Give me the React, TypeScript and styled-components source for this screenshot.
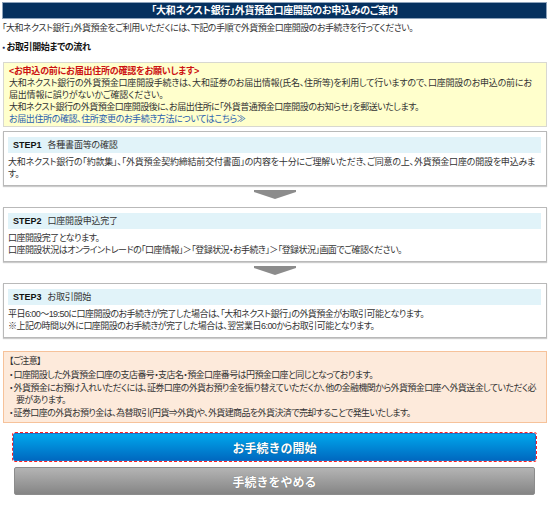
import React from "react";
import styled, { createGlobalStyle } from "styled-components";

const Global = createGlobalStyle`
  html, body { margin: 0; padding: 0; background: #fff; }
  body {
    font-family: "Liberation Sans", "Noto Sans CJK JP", sans-serif;
    font-size: 9px;
    color: #333;
    font-feature-settings: "palt";
    letter-spacing: -0.2px;
  }
`;

const Page = styled.div`
  width: 550px;
  padding: 2px 3px 10px 2px;
  box-sizing: border-box;
`;

const TitleBar = styled.h1`
  margin: 0;
  height: 17px;
  background: #06315f;
  border: 1px solid #8ea3bb;
  box-sizing: border-box;
  color: #fff;
  font-size: 10px;
  font-weight: bold;
  letter-spacing: -0.3px;
  line-height: 15px;
  text-align: center;
`;

const Intro = styled.p`
  margin: 3px 0 0 0;
  line-height: 12px;
  letter-spacing: -0.5px;
`;

const FlowHeading = styled.p`
  margin: 7px 0 0 0;
  font-weight: bold;
  color: #111;
  line-height: 12px;
  letter-spacing: -0.4px;
  &::before { content: "●"; color: #1a2a5a; font-size: 5px; vertical-align: 1px; margin-right: 2px; }
`;

const NoticeBox = styled.div`
  margin: 9px 0 0 1px;
  background: #ffffcc;
  border: 1px solid #d8d8d0;
  padding: 2px 10px 1px 5px;
  line-height: 12px;
`;

const NoticeTitle = styled.div`
  color: #cc1111;
  font-weight: bold;
`;

const NoticeText = styled.div<{ $tight?: boolean }>`
  letter-spacing: ${(p) => (p.$tight ? "-0.5px" : "inherit")};
`;

const NoticeLink = styled.a`
  display: block;
  color: #2b5fae;
  text-decoration: none;
  letter-spacing: -0.4px;
`;

const StepBox = styled.div<{ $first?: boolean }>`
  margin: ${(p) => (p.$first ? "4px" : "0")} 0 0 1px;
  border: 1px solid #b9b9b9;
  box-shadow: 0 1px 1px #ccc;
  padding: 5px 5px 5px 4px;
`;

const StepHead = styled.div`
  background: #e1f3f9;
  height: 16px;
  line-height: 16px;
  padding: 0 5px;
  color: #333;
`;

const StepNo = styled.span`
  font-weight: bold;
  color: #111;
  margin-right: 6px;
  letter-spacing: 0;
`;

const StepBody = styled.div<{ $tight?: boolean }>`
  margin-top: 3px;
  line-height: 12px;
  letter-spacing: ${(p) => (p.$tight ? "-0.55px" : "inherit")};
`;

const ArrowRow = styled.div`
  display: flex;
  justify-content: center;
  padding: 4px 0 8px 0;
  svg { display: block; }
`;

const CautionBox = styled.div`
  margin: 13px 0 0 1px;
  background: #fdeadb;
  border: 1px solid #f6c29a;
  padding: 3px 4px 3px 5px;
  line-height: 12px;
  letter-spacing: -0.6px;
`;

const CautionList = styled.ul`
  list-style: none;
  margin: 2px 0 0 0;
  padding: 0;
`;

const CautionItem = styled.li`
  padding-left: 7px;
  text-indent: -7px;
  margin-bottom: 1px;
  &:last-child { margin-bottom: 0; }
  &::before { content: "・"; letter-spacing: -4px; margin-right: 4px; }
`;

const Buttons = styled.div`
  display: flex;
  flex-direction: column;
  gap: 6px;
  padding: 10px 11px 0 11px;
`;

const Button = styled.button<{ $variant: "primary" | "secondary" }>`
  display: block;
  width: 100%;
  height: 28px;
  border-radius: 2px;
  font-family: "Liberation Sans", "Noto Sans CJK JP", sans-serif;
  font-size: 12px;
  font-weight: bold;
  letter-spacing: 0;
  color: #fff;
  text-shadow: 0 0 1px rgba(0, 0, 0, 0.4);
  cursor: pointer;
  ${(p) =>
    p.$variant === "primary"
      ? `
    background: linear-gradient(#00a7ec, #0069c0);
    border: 1px solid #1c72c9;
    outline: 1px dashed #ff2222;
    outline-offset: 0px;
  `
      : `
    background: linear-gradient(#b4b4b4, #858585);
    border: 1px solid #8c8c8c;
    margin-left: 1px;
    width: calc(100% - 2px);
  `}
`;

const DownArrow = () => (
  <svg width="42" height="9" viewBox="0 0 42 9">
    <polygon points="0,0 42,0 42,2 21,9 0,2" fill="#8c8c8c" />
  </svg>
);

export default function App() {
  return (
    <>
      <Global />
      <Page>
        <TitleBar>「大和ネクスト銀行」外貨預金口座開設のお申込みのご案内</TitleBar>
        <Intro>
          「大和ネクスト銀行」外貨預金をご利用いただくには、下記の手順で外貨預金口座開設のお手続きを行ってください。
        </Intro>
        <FlowHeading>お取引開始までの流れ</FlowHeading>
        <NoticeBox>
          <NoticeTitle>&lt;お申込の前にお届出住所の確認をお願いします&gt;</NoticeTitle>
          <NoticeText>
            大和ネクスト銀行の外貨預金口座開設手続きは、大和証券のお届出情報(氏名、住所等)を利用して行いますので、口座開設のお申込の前にお届出情報に誤りがないかご確認ください。
          </NoticeText>
          <NoticeText $tight>
            大和ネクスト銀行の外貨預金口座開設後に、お届出住所に「外貨普通預金口座開設のお知らせ」を郵送いたします。
          </NoticeText>
          <NoticeLink href="#">お届出住所の確認、住所変更のお手続き方法についてはこちら≫</NoticeLink>
        </NoticeBox>

        <StepBox $first>
          <StepHead>
            <StepNo>STEP1</StepNo>各種書面等の確認
          </StepHead>
          <StepBody>
            大和ネクスト銀行の「約款集」、「外貨預金契約締結前交付書面」の内容を十分にご理解いただき、ご同意の上、外貨預金口座の開設を申込みます。
          </StepBody>
        </StepBox>
        <ArrowRow>
          <DownArrow />
        </ArrowRow>
        <StepBox>
          <StepHead>
            <StepNo>STEP2</StepNo>口座開設申込完了
          </StepHead>
          <StepBody $tight>
            <div>口座開設完了となります。</div>
            <div>口座開設状況はオンライントレードの「口座情報」＞「登録状況・お手続き」＞「登録状況」画面でご確認ください。</div>
          </StepBody>
        </StepBox>
        <ArrowRow>
          <DownArrow />
        </ArrowRow>
        <StepBox>
          <StepHead>
            <StepNo>STEP3</StepNo>お取引開始
          </StepHead>
          <StepBody $tight>
            <div>平日6:00～19:50に口座開設のお手続きが完了した場合は、「大和ネクスト銀行」の外貨預金がお取引可能となります。</div>
            <div>※上記の時間以外に口座開設のお手続きが完了した場合は、翌営業日6:00からお取引可能となります。</div>
          </StepBody>
        </StepBox>

        <CautionBox>
          <div>【ご注意】</div>
          <CautionList>
            <CautionItem>口座開設した外貨預金口座の支店番号・支店名・預金口座番号は円預金口座と同じとなっております。</CautionItem>
            <CautionItem>外貨預金にお預け入れいただくには、証券口座の外貨お預り金を振り替えていただくか、他の金融機関から外貨預金口座へ外貨送金していただく必要があります。</CautionItem>
            <CautionItem>証券口座の外貨お預り金は、為替取引(円貨⇒外貨)や、外貨建商品を外貨決済で売却することで発生いたします。</CautionItem>
          </CautionList>
        </CautionBox>

        <Buttons>
          <Button $variant="primary">お手続きの開始</Button>
          <Button $variant="secondary">手続きをやめる</Button>
        </Buttons>
      </Page>
    </>
  );
}
